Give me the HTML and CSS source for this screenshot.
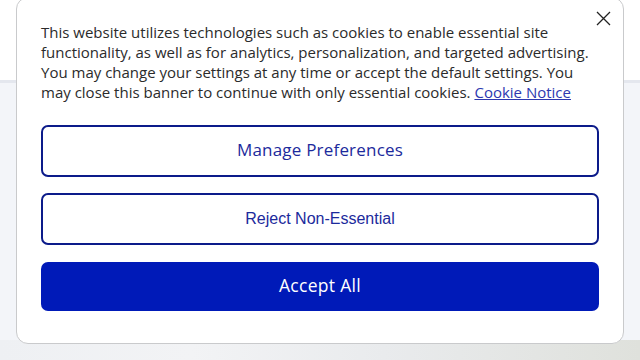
FILE: index.html
```html
<!DOCTYPE html>
<html lang="en">
<head>
<meta charset="utf-8">
<title>Cookie banner</title>
<link rel="stylesheet" href="styles.css">
</head>
<body>
<div class="page">
  <header class="site-header"></header>
  <main class="site-main"></main>
  <div class="hero-blur"></div>
</div>
<div class="banner" role="dialog" aria-label="Cookie banner">
  <button class="close" aria-label="Close">
    <svg width="15" height="15" viewBox="0 0 15 15"><path d="M1 1L14 14M14 1L1 14" stroke="#222" stroke-width="1.3" fill="none"/></svg>
  </button>
  <p class="text">This website utilizes technologies such as cookies to enable essential site functionality, as well as for analytics, personalization, and targeted advertising. You may change your settings at any time or accept the default settings. You may close this banner to continue with only essential cookies. <a href="#" class="link">Cookie Notice</a></p>
  <div class="actions">
    <button class="btn btn-outline btn-lift">Manage Preferences</button>
    <button class="btn btn-outline btn-arial">Reject Non-Essential</button>
    <button class="btn btn-fill btn-lift">Accept All</button>
  </div>
</div>
</body>
</html>
```
FILE: styles.css
```css
html, body {
  margin: 0;
  padding: 0;
  width: 640px;
  height: 360px;
  overflow: hidden;
  font-family: "Open Sans", "Noto Sans", sans-serif;
}
.page {
  height: 360px;
  display: flex;
  flex-direction: column;
  background: #f3f5f9;
}
.site-header {
  height: 80px;
  background: #fff;
  border-bottom: 3px solid #e4e7ee;
}
.site-main {
  flex: 1;
  background: #f3f5f9;
}
.hero-blur {
  height: 20px;
  background: linear-gradient(90deg, #eef0f3 0%, #f2f3f5 30%, #e9ebed 60%, #dfe1dc 100%);
}
.banner {
  position: absolute;
  left: 16px;
  top: -3px;
  width: 608px;
  height: 347px;
  box-sizing: border-box;
  background: #fff;
  border: 1px solid #c9cacc;
  border-radius: 12px;
  padding: 24px 24px 0 24px;
}
.close {
  position: absolute;
  right: 12px;
  top: 13px;
  width: 15px;
  height: 15px;
  padding: 0;
  border: 0;
  background: none;
  display: flex;
}
.text {
  margin: 0;
  font-size: 15px;
  line-height: 20px;
  color: #2b2b2b;
}
.link {
  color: #2d38b0;
  text-decoration: underline;
}
.actions {
  display: flex;
  flex-direction: column;
  gap: 16px;
  margin-top: 23px;
}
.btn {
  height: 52px;
  border-radius: 7px;
  font-family: "Open Sans", "Noto Sans", sans-serif;
  font-size: 17px;
  letter-spacing: 0.2px;
  font-weight: 500;
  cursor: pointer;
}
.btn-lift {
  padding-bottom: 5px;
}
.btn-outline {
  background: #fff;
  border: 2px solid #0c1b8a;
  color: #1c2a9c;
}
.btn-arial {
  font-family: "Liberation Sans", Arial, sans-serif;
  font-size: 16px;
  letter-spacing: 0;
  font-weight: 400;
}
.btn-fill {
  height: 49px;
  margin-top: 1px;
  border: 0;
  background: #001ab8;
  color: #fff;
  font-size: 17.5px;
  letter-spacing: 0.3px;
}
```
